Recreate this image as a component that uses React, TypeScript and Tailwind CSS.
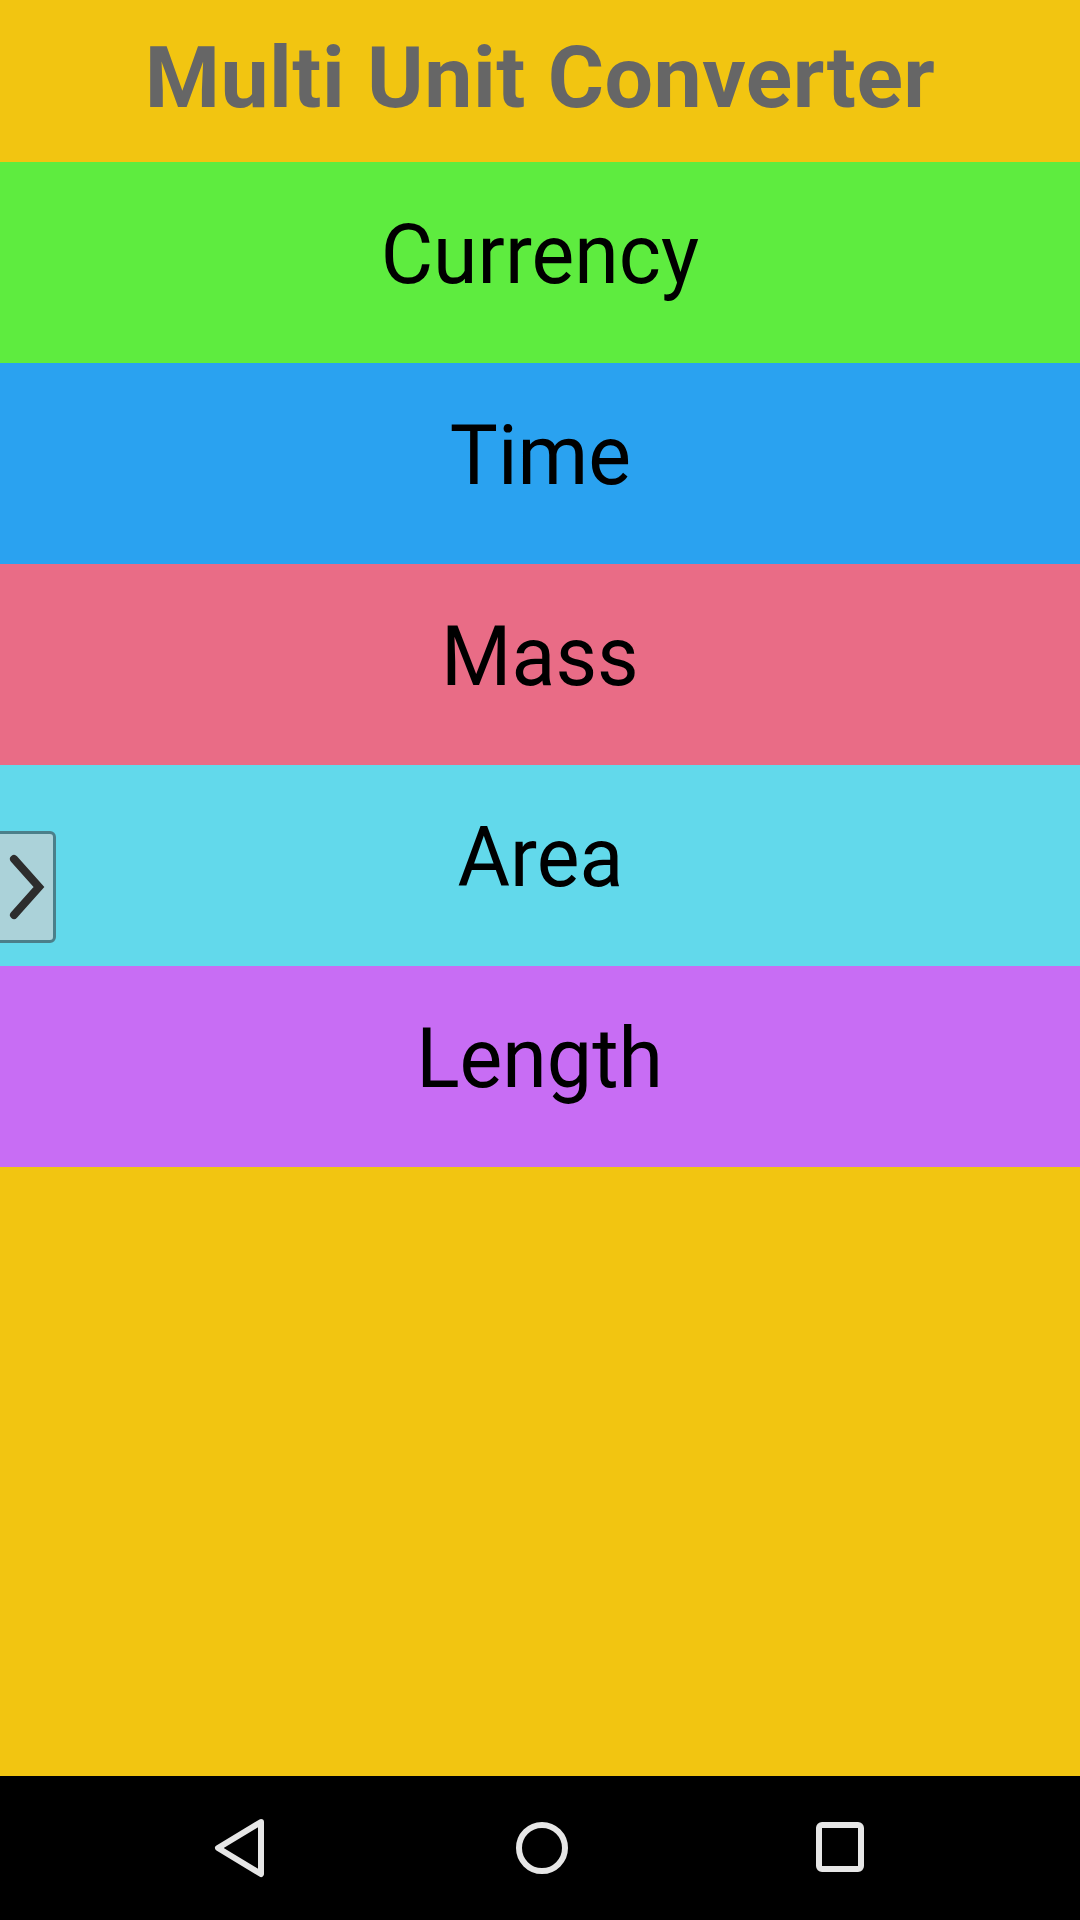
import { ReactNode } from 'react'

const units = [
  { name: 'Currency', bg: 'bg-[#5eec3f]' },
  { name: 'Time', bg: 'bg-[#2aa2f0]' },
  { name: 'Mass', bg: 'bg-[#e96c86]' },
  { name: 'Area', bg: 'bg-[#62d9eb]' },
  { name: 'Length', bg: 'bg-[#c86df4]' },
]

function Band({ bg, children }: { bg: string; children: ReactNode }) {
  return (
    <div className={`${bg} h-[201px] flex items-center justify-center relative`}>
      {children}
    </div>
  )
}

function NavBar() {
  return (
    <div className="h-[144px] bg-black flex items-center justify-between pl-[212px] pr-[213px]">
      <svg width="56" height="60" viewBox="0 0 56 60" fill="none">
        <path
          d="M49 4 L6 30 L49 56 Z"
          stroke="#e6e6e6"
          strokeWidth="6"
          strokeLinejoin="round"
        />
      </svg>
      <svg width="58" height="58" viewBox="0 0 58 58" fill="none">
        <circle cx="29" cy="29" r="23" stroke="#e6e6e6" strokeWidth="6" />
      </svg>
      <svg width="52" height="54" viewBox="0 0 52 54" fill="none">
        <rect x="4" y="4" width="42" height="44" rx="3" stroke="#e6e6e6" strokeWidth="6" />
      </svg>
    </div>
  )
}

export default function App() {
  return (
    <div
      className="w-[1080px] h-[1920px] bg-[#f2c511] flex flex-col overflow-hidden"
      style={{ fontFamily: 'Roboto, "Noto Sans", sans-serif' }}
    >
      <div className="h-[162px] flex items-center justify-center">
        <h1 className="text-[86px] font-bold text-[#666666] leading-none tracking-[0.5px] pb-[6px]">
          Multi Unit Converter
        </h1>
      </div>

      {units.map((u) => (
        <Band key={u.name} bg={u.bg}>
          {u.name === 'Area' && (
            <div className="absolute left-[-8px] top-[66px] w-[64px] h-[112px] rounded-[6px] border-[3px] border-[#4b7f8a] bg-[#abd2d9] flex items-center justify-end pr-[8px]">
              <svg width="42" height="72" viewBox="0 0 42 72" fill="none">
                <path
                  d="M11 8 L36 36 L11 64"
                  stroke="#2d2d2d"
                  strokeWidth="8"
                  strokeLinecap="round"
                  strokeLinejoin="miter"
                />
              </svg>
            </div>
          )}
          <span className="text-[84px] text-black leading-none scale-x-[0.96] pb-[16px]">
            {u.name}
          </span>
        </Band>
      ))}

      <div className="flex-1" />
      <NavBar />
    </div>
  )
}
